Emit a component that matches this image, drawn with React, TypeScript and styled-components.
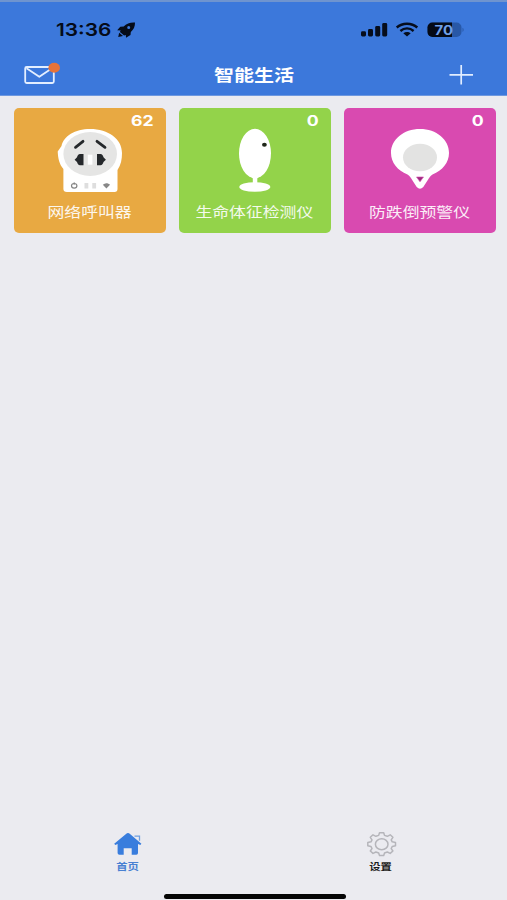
import React from "react";
import styled, { createGlobalStyle } from "styled-components";

const GlobalStyle = createGlobalStyle`
  * { box-sizing: border-box; }
  body { margin: 0; background: #ebebf0; }
`;

const Screen = styled.div`
  display: flex;
  flex-direction: column;
  width: 507px;
  height: 900px;
  overflow: hidden;
  background: #ebebf0;
  font-family: Inter, "Noto Sans CJK SC", sans-serif;
`;

const Header = styled.header`
  flex: none;
  height: 96px;
  background: #3c78db;
  border-top: 2px solid #6f94cf;
  border-bottom: 1px solid #6e98df;
`;

const StatusBar = styled.div`
  display: flex;
  align-items: center;
  justify-content: space-between;
  height: 54px;
  padding: 1px 43px 0 56px;
`;

const StatusGroup = styled.div`
  display: flex;
  align-items: center;
`;

const Time = styled.span`
  width: 60px;
  font-size: 17.5px;
  font-weight: 600;
  line-height: 22px;
  color: #050b18;
  white-space: nowrap;
  transform: scaleX(1.19);
  transform-origin: left;
`;

const NavBar = styled.div`
  display: grid;
  grid-template-columns: 80px 1fr 80px;
  align-items: center;
  height: 38px;
`;

const Title = styled.h1`
  margin: 0;
  font-size: 16.4px;
  font-weight: 700;
  line-height: 22px;
  color: #fff;
  text-align: center;
  transform: translateX(0.5px) scaleX(1.22);
`;

const IconButton = styled.button`
  display: flex;
  width: 80px;
  height: 38px;
  padding: 0;
  border: 0;
  background: none;
`;

const Devices = styled.main`
  flex: 1;
  display: grid;
  grid-template-columns: repeat(3, 152px);
  grid-auto-rows: 125px;
  gap: 12.800px;
  padding: 11.700px 11px 0 14px;
`;

const Card = styled.section<{ $color: string }>`
  display: flex;
  flex-direction: column;
  align-items: center;
  height: 125px;
  border-radius: 5px;
  background: ${(p) => p.$color};
  color: #fff;
`;

const Count = styled.span`
  align-self: flex-end;
  height: 18px;
  margin-right: 12px;
  padding-top: 4px;
  font-size: 14.5px;
  font-weight: 700;
  line-height: 18px;
  transform: scaleX(1.22);
  transform-origin: right;
`;

const Art = styled.svg`
  flex: none;
  width: 70px;
  height: 70px;
`;

const CardLabel = styled.span`
  margin-top: 6px;
  font-size: 13.7px;
  font-weight: 400;
  line-height: 20px;
  opacity: 0.9;
  white-space: nowrap;
  transform: translateX(-0.6px) scaleX(1.23);
`;

const TabBar = styled.nav`
  display: grid;
  grid-template-columns: 1fr 1fr;
  height: 63px;
  padding-left: 1px;
`;

const Tab = styled.a<{ $active?: boolean }>`
  display: flex;
  flex-direction: column;
  align-items: center;
  color: ${(p) => (p.$active ? "#4880d2" : "#1c1c20")};
`;

const TabLabel = styled.span`
  margin-top: 2px;
  font-size: 9.6px;
  font-weight: 700;
  line-height: 14px;
  transform: scaleX(1.18);
`;

const HomeArea = styled.div`
  display: flex;
  justify-content: center;
  height: 7px;
  padding-left: 3px;
`;

const HomeIndicator = styled.div`
  width: 182px;
  height: 5px;
  margin-top: 0.500px;
  border-radius: 3px;
  background: #050505;
`;

const Rocket = () => (
  <svg width="20" height="18" viewBox="0 0 20 18">
    <path
      fillRule="evenodd"
      d="M19 1.5C14.5 1.1 10.5 2.6 7.7 5.4L4.3 5.7 1.2 9.3l3.5.3-.8 1.5 4.2 3.5 1.7-.7.2 2.9 4.5-2.9.3-2.9C17.5 8.700 19.200 5.500 19 1.500ZM12.700 4.900a1.500 1.500 0 1 1 0 3 1.500 1.500 0 1 1 0-3Z"
      fill="#050b18"
    />
    <path d="M3.200 11.800 7 15l-4.800.9Z" fill="#050b18" />
  </svg>
);

const Signals = () => (
  <svg width="104" height="18" viewBox="0 0 104 18">
    <g fill="#060d1c">
      <rect x="1" y="10.300" width="5" height="5.200" rx="1.400" />
      <rect x="8" y="8" width="5" height="7.500" rx="1.400" />
      <rect x="15.200" y="5" width="5" height="10.500" rx="1.400" />
      <rect x="22.200" y="2" width="5" height="13.500" rx="1.400" />
    </g>
    <g fill="none" stroke="#060d1c" strokeWidth="2.400">
      <path d="M36.700 6.500C42.500 1.400 51.500 1.400 57.300 6.500" />
      <path d="M40.400 10C44.300 6.500 49.700 6.500 53.600 10" />
    </g>
    <path d="M43.300 12.300c2.200-1.900 5.200-1.900 7.400 0L47 15.400Z" fill="#060d1c" />
    <rect x="67.500" y="1.500" width="34" height="14.500" rx="5" fill="#2858a7" />
    <path d="M72.500 1.500H92V16H72.500a5 5 0 0 1-5-5V6.500a5 5 0 0 1 5-5Z" fill="#050a16" />
    <path d="M102.500 6.700c1.500.7 1.500 3.500 0 4.200Z" fill="#2858a7" />
    <text
      x="74.500"
      y="13.500"
      textLength="18.500"
      lengthAdjust="spacingAndGlyphs"
      fontFamily="Inter, sans-serif"
      fontSize="13"
      fontWeight="700"
      fill="#6f9fe8"
    >
      70
    </text>
  </svg>
);

const Mail = () => (
  <svg width="80" height="38" viewBox="0 0 80 38">
    <g fill="none" stroke="#e4efff" strokeWidth="1.800" strokeLinejoin="round">
      <rect x="25.200" y="11" width="28.600" height="16" rx="1.500" />
      <path d="M26.500 12.200 39.300 20.800 52 12.200" />
    </g>
    <ellipse cx="54.200" cy="11.800" rx="5.800" ry="5" fill="#e77339" />
  </svg>
);

const Plus = () => (
  <svg width="80" height="38" viewBox="0 0 80 38">
    <path d="M22.500 18.800H46M34.200 9V28.500" fill="none" stroke="#e1edff" strokeWidth="1.700" />
  </svg>
);

const CallerArt = () => (
  <Art viewBox="0 0 70 70">
    <path
      d="M35 3C20 3 8.500 10 6.500 20L2.700 25.500c.4 7 1.500 12.500 5.700 17.500V63q0 3 3.500 3H59.500q3 0 3-3V44c3.500-5 4.500-11 4.500-17C67 13 53.500 3 35 3Z"
      fill="#fff"
    />
    <ellipse cx="35.200" cy="28" rx="26.800" ry="22" fill="#e5e5e4" />
    <g stroke="#25282b" strokeWidth="2.800" strokeLinecap="round">
      <path d="M20.500 21.300 28 15.300M42 15.300 50 21.300" />
    </g>
    <path d="M28.500 28v11.300h-3.500c-1.600 0-2.500-1.700-3-3.200L19.600 33.700l2.400-2.400C22.500 29.700 23.400 28 25 28Z" fill="#25282b" />
    <path d="M42 28v11.300h3.500c1.600 0 2.500-1.700 3-3.200l2.400-2.400-2.400-2.400C48 29.700 47.100 28 45.500 28Z" fill="#25282b" />
    <rect x="32.800" y="28.700" width="4.600" height="10" fill="#fff" />
    <ellipse cx="19.200" cy="59.800" rx="2.700" ry="2.300" fill="none" stroke="#858585" strokeWidth="1.200" />
    <path d="M19.200 56.300v2.500" stroke="#858585" strokeWidth="1" />
    <path d="M29.500 57h3.800v5.600h-3.800ZM37.300 57h3.800v5.600h-3.800Z" fill="#dedede" />
    <path d="M47.800 58.800c2.200-2 5-2 7.200 0l-3.600 3.800Z" fill="#888" />
  </Art>
);

const MonitorArt = () => (
  <Art viewBox="0 0 70 70">
    <ellipse cx="35" cy="27.500" rx="16" ry="24.700" fill="#fff" />
    <path d="M31 50h8l-1.700 2.500v6h-4.500v-6Z" fill="#fff" />
    <ellipse cx="34.800" cy="61" rx="15.500" ry="4.800" fill="#fff" />
    <ellipse cx="44.400" cy="18.800" rx="2.400" ry="2" fill="#20271b" />
  </Art>
);

const FallArt = () => (
  <Art viewBox="0 0 70 70">
    <path
      d="M35 3C18.500 3 6 13.500 6 27c0 9.500 6.500 17.500 16.500 21.500 2.500 1.500 3.500 3.500 5 6l4.200 6.500q3.300 3.500 6.600 0l4.200-6.500c1.500-2.500 2.500-4.500 5-6C57.500 44.500 64 36.500 64 27 64 13.500 51.500 3 35 3Z"
      fill="#fff"
    />
    <ellipse cx="35" cy="31.500" rx="17" ry="13.700" fill="#e3e3e2" />
    <path d="M31.500 51h7L35 55.800Z" fill="#9c2d7e" stroke="#d94ab0" strokeWidth="0.600" />
  </Art>
);

const House = () => (
  <svg width="32" height="28" viewBox="0 0 32 28">
    <path
      d="M16 3Q15 3 14 4L2.200 13.700l1.100 1.200 2.300-1V23q0 1.800 1.800 1.800h4.300v-6.500h8v6.500h4.600q1.700 0 1.700-1.800v-9.100l2.300 1 1.100-1.200L18 4Q17 3 16 3Z"
      fill="#397ddd"
    />
    <path d="M22.500 6.200h5v4.500" fill="none" stroke="#6f9fe0" strokeWidth="1.300" />
  </svg>
);

const Gear = () => (
  <svg width="32" height="28" viewBox="-1 0 32 28">
    <g fill="none" stroke="#b5b5ba" strokeWidth="1.500" strokeLinejoin="round">
      <path d="M13.500 2.700h4.200l.8 2.700 2.800.9 2.900-1.500 2.700 2.500-1.700 2.500 1 2 3.300.7v3.300l-3.300.7-1 2.100 1.700 2.400-2.700 2.400-2.900-1.400-2.800 1-.8 2.600h-4.200l-.8-2.600-2.800-1L7 23.400 4.300 21 6 18.600l-1-2.100-3.200-.7v-3.300l3.200-.7 1-2-1.700-2.500L7 4.800l2.900 1.500 2.800-.9Z" />
      <ellipse cx="15.700" cy="14.200" rx="6.300" ry="5.500" />
    </g>
  </svg>
);

const devices = [
  { name: "网络呼叫器", count: 62, color: "#e8a942", Picture: CallerArt },
  { name: "生命体征检测仪", count: 0, color: "#93d34a", Picture: MonitorArt },
  { name: "防跌倒预警仪", count: 0, color: "#d94ab0", Picture: FallArt },
];

export default function App() {
  return (
    <Screen>
      <GlobalStyle />
      <Header>
        <StatusBar>
          <StatusGroup>
            <Time>13:36</Time>
            <Rocket />
          </StatusGroup>
          <Signals />
        </StatusBar>
        <NavBar>
          <IconButton aria-label="消息">
            <Mail />
          </IconButton>
          <Title>智能生活</Title>
          <IconButton aria-label="添加">
            <Plus />
          </IconButton>
        </NavBar>
      </Header>
      <Devices>
        {devices.map(({ name, count, color, Picture }) => (
          <Card key={name} $color={color}>
            <Count>{count}</Count>
            <Picture />
            <CardLabel>{name}</CardLabel>
          </Card>
        ))}
      </Devices>
      <TabBar>
        <Tab $active>
          <House />
          <TabLabel>首页</TabLabel>
        </Tab>
        <Tab>
          <Gear />
          <TabLabel>设置</TabLabel>
        </Tab>
      </TabBar>
      <HomeArea>
        <HomeIndicator />
      </HomeArea>
    </Screen>
  );
}
